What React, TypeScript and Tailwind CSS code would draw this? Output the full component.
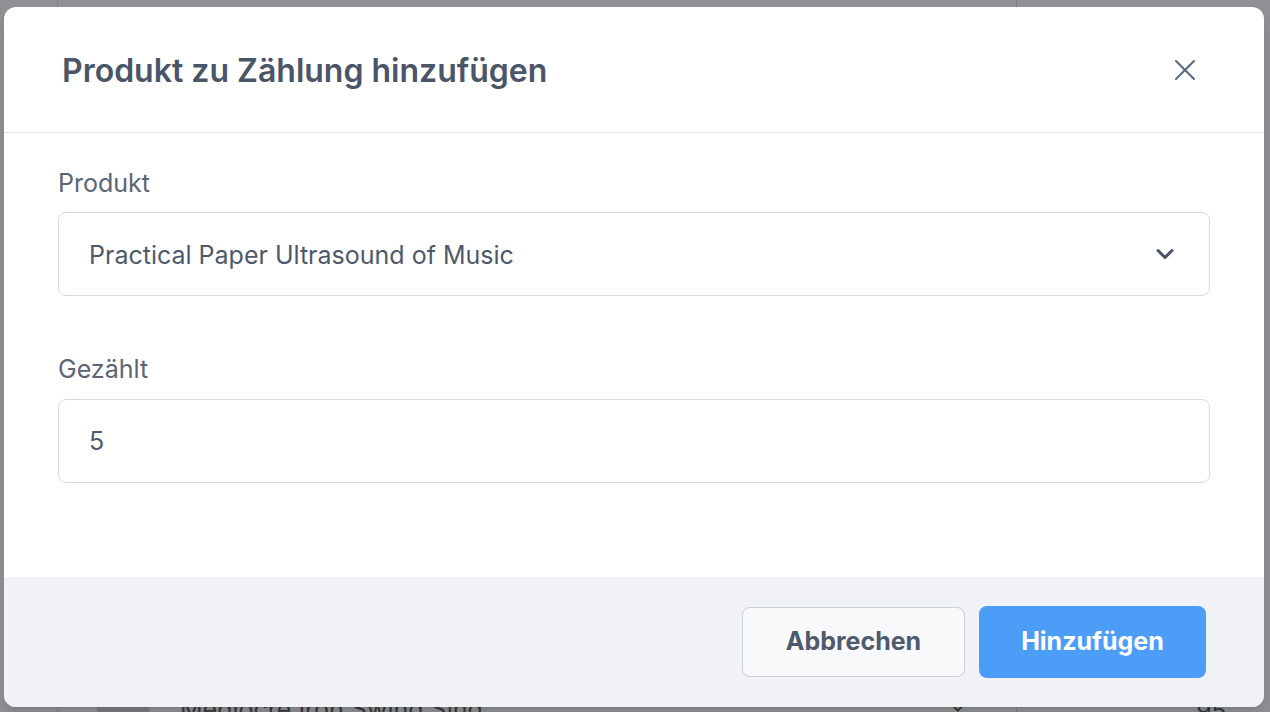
import { X, ChevronDown } from "lucide-react"

const font = { fontFamily: "Inter, 'Noto Sans', sans-serif" }

function BehindPage() {
  // faint bits of the page that peek out round the modal
  return (
    <div className="absolute inset-0">
      <div className="absolute left-[57px] top-0 h-full w-px bg-[#7f8083]" />
      <div className="absolute left-[1016px] top-0 h-full w-px bg-[#7f8083]" />
      <div className="absolute left-[97px] top-[690px] h-[30px] w-[51px] bg-[#7b7c7f]" />
      <div className="absolute left-[148px] top-[690px] h-[30px] w-px bg-[#7f8083]" />
      <span className="absolute left-[180px] top-[694px] text-[25px] leading-[30px] text-[#38393b]">
        Mediocre Iron Swing Sing
      </span>
      <span className="absolute left-[948px] top-[688px] text-[25px] leading-[30px] text-[#38393b]">⌄</span>
      <span className="absolute left-[1196px] top-[696px] text-[25px] leading-[30px] text-[#38393b]">95</span>
    </div>
  )
}

export default function App() {
  return (
    <div className="relative h-[712px] w-full overflow-hidden bg-[#8f9093]" style={font}>
      <BehindPage />

      <div className="absolute left-[4px] top-[7px] flex h-[700px] w-[1260px] flex-col overflow-hidden rounded-[12px] bg-white shadow-lg">
        <div className="flex h-[126px] shrink-0 items-center justify-between border-b border-[#dfe3e8] pl-[58px] pr-[61px]">
          <h2 className="pt-[2px] text-[32px] font-semibold text-[#4a5568]">Produkt zu Zählung hinzufügen</h2>
          <button className="text-[#5b6b82]">
            <X size={36} strokeWidth={1.4} />
          </button>
        </div>

        <div className="flex flex-1 flex-col px-[54px] pt-[35px]">
          <label className="mb-[14px] block text-[25px] leading-[30px] text-[#5a6578]">Produkt</label>
          <div className="flex h-[84px] items-center justify-between rounded-[8px] border border-[#d6dbe1] pl-[30px] pr-[30px]">
            <span className="pt-[3px] text-[25px] text-[#4e5a6c]">Practical Paper Ultrasound of Music</span>
            <ChevronDown size={28} strokeWidth={2.6} className="text-[#4a5568]" />
          </div>

          <label className="mb-[15px] mt-[57px] block pt-[1px] text-[25px] leading-[30px] text-[#5a6578]">Gezählt</label>
          <div className="flex h-[84px] items-center rounded-[8px] border border-[#d6dbe1] pl-[30px]">
            <span className="pt-[2px] text-[25px] text-[#4e5a6c]">5</span>
          </div>
        </div>

        <div className="flex h-[130px] shrink-0 items-center justify-end gap-[14px] bg-[#f0f2f5] pr-[58px]">
          <button className="h-[70px] w-[223px] rounded-[8px] border border-[#c9d0da] bg-[#f8f9fb] text-[25px] font-bold text-[#4f5b6d]">
            Abbrechen
          </button>
          <button className="h-[72px] w-[227px] rounded-[8px] bg-[#4c9df8] text-[25px] font-bold text-white">
            Hinzufügen
          </button>
        </div>
      </div>
    </div>
  )
}
